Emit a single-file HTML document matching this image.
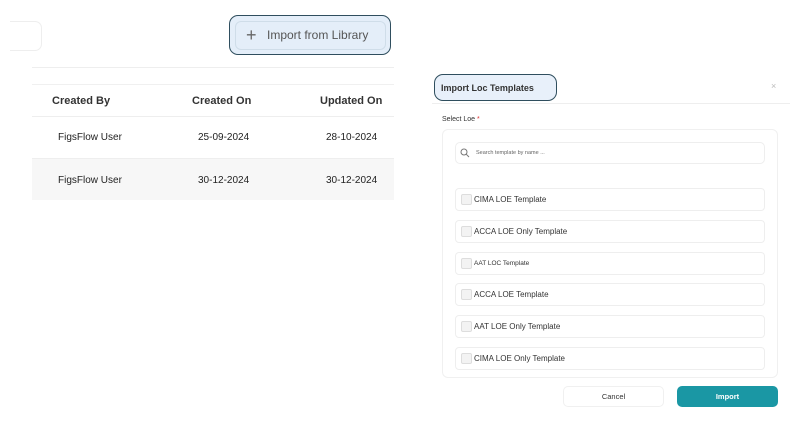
<!DOCTYPE html>
<html><head><style>
*{margin:0;padding:0;box-sizing:border-box}
body{width:800px;height:441px;background:#fff;font-family:"Liberation Sans",sans-serif;position:relative;overflow:hidden;color:#222}
.a{position:absolute}
.hd{font-size:11px;font-weight:bold;color:#333;top:95px}
.cell{font-size:10px;color:#222}
.item{position:absolute;left:455px;width:310px;height:23px;border:1px solid #eee;border-radius:4px;font-size:8px;color:#333;padding-left:18px;line-height:21px}
.item:before{content:"";position:absolute;left:5px;top:5px;width:9px;height:9px;border:1px solid #ddd;background:#f3f3f3;border-radius:2px}
</style></head><body>
<div class="a" style="left:10px;top:21px;width:32px;height:30px;border:1px solid #eee;border-left:none;border-radius:0 7px 7px 0"></div>
<div class="a" style="left:229px;top:15px;width:162px;height:40px;border:1.5px solid #2f4e5e;border-radius:9px;background:#e4eef9"></div>
<div class="a" style="left:235px;top:21px;width:151px;height:29px;border:1px solid #cfdde9;border-radius:6px"></div>
<div class="a" style="left:246px;top:25px;font-size:18px;color:#666;font-weight:300">+</div>
<div class="a" style="left:267px;top:28px;font-size:12px;color:#555">Import from Library</div>
<div class="a" style="left:32px;top:67px;width:362px;height:1px;background:#eee"></div>
<div class="a" style="left:32px;top:84px;width:362px;height:1px;background:#f0f0f0"></div>
<div class="a" style="left:32px;top:116px;width:362px;height:1px;background:#eee"></div>
<div class="a" style="left:32px;top:158px;width:362px;height:1px;background:#eee"></div>
<div class="a" style="left:32px;top:159px;width:362px;height:41px;background:#f7f7f7"></div>
<div class="a hd" style="left:52px">Created By</div>
<div class="a hd" style="left:192px">Created On</div>
<div class="a hd" style="left:320px">Updated On</div>
<div class="a cell" style="left:58px;top:132px">FigsFlow User</div>
<div class="a cell" style="left:198px;top:132px">25-09-2024</div>
<div class="a cell" style="left:326px;top:132px">28-10-2024</div>
<div class="a cell" style="left:58px;top:175px">FigsFlow User</div>
<div class="a cell" style="left:198px;top:175px">30-12-2024</div>
<div class="a cell" style="left:326px;top:175px">30-12-2024</div>

<div class="a" style="left:434px;top:74px;width:123px;height:27px;border:1.2px solid #2f4e5e;border-radius:9px;background:#e8f0fa;font-size:9px;font-weight:bold;color:#333;padding:8px 0 0 6px">Import Loc Templates</div>
<div class="a" style="left:771px;top:81px;font-size:9px;color:#bbb">×</div>
<div class="a" style="left:432px;top:103px;width:358px;height:1px;background:#eee"></div>
<div class="a" style="left:442px;top:116px;font-size:7px;color:#333">Select Loe <span style="color:#d33">*</span></div>
<div class="a" style="left:442px;top:129px;width:336px;height:249px;border:1px solid #f0f0f0;border-radius:6px"></div>
<div class="a" style="left:455px;top:142px;width:310px;height:22px;border:1px solid #eee;border-radius:5px"></div>
<svg class="a" style="left:460px;top:148px" width="10" height="10" viewBox="0 0 10 10"><circle cx="4" cy="4" r="3" fill="none" stroke="#777" stroke-width="1"/><path d="M6.2 6.2L9 9" stroke="#777" stroke-width="1"/></svg>
<div class="a" style="left:476px;top:150px;font-size:5.5px;color:#666">Search template by name ...</div>
<div class="item" style="top:188px">CIMA LOE Template</div>
<div class="item" style="top:220px">ACCA LOE Only Template</div>
<div class="item" style="top:252px;font-size:6.5px">AAT LOC Template</div>
<div class="item" style="top:283px">ACCA LOE Template</div>
<div class="item" style="top:315px">AAT LOE Only Template</div>
<div class="item" style="top:347px">CIMA LOE Only Template</div>
<div class="a" style="left:563px;top:386px;width:101px;height:21px;border:1px solid #f0f0f0;border-radius:5px;font-size:7.5px;color:#333;text-align:center;line-height:20px">Cancel</div>
<div class="a" style="left:677px;top:386px;width:101px;height:21px;background:#1a97a4;border-radius:5px;font-size:7.5px;font-weight:bold;color:#fff;text-align:center;line-height:21px">Import</div>
</body></html>
